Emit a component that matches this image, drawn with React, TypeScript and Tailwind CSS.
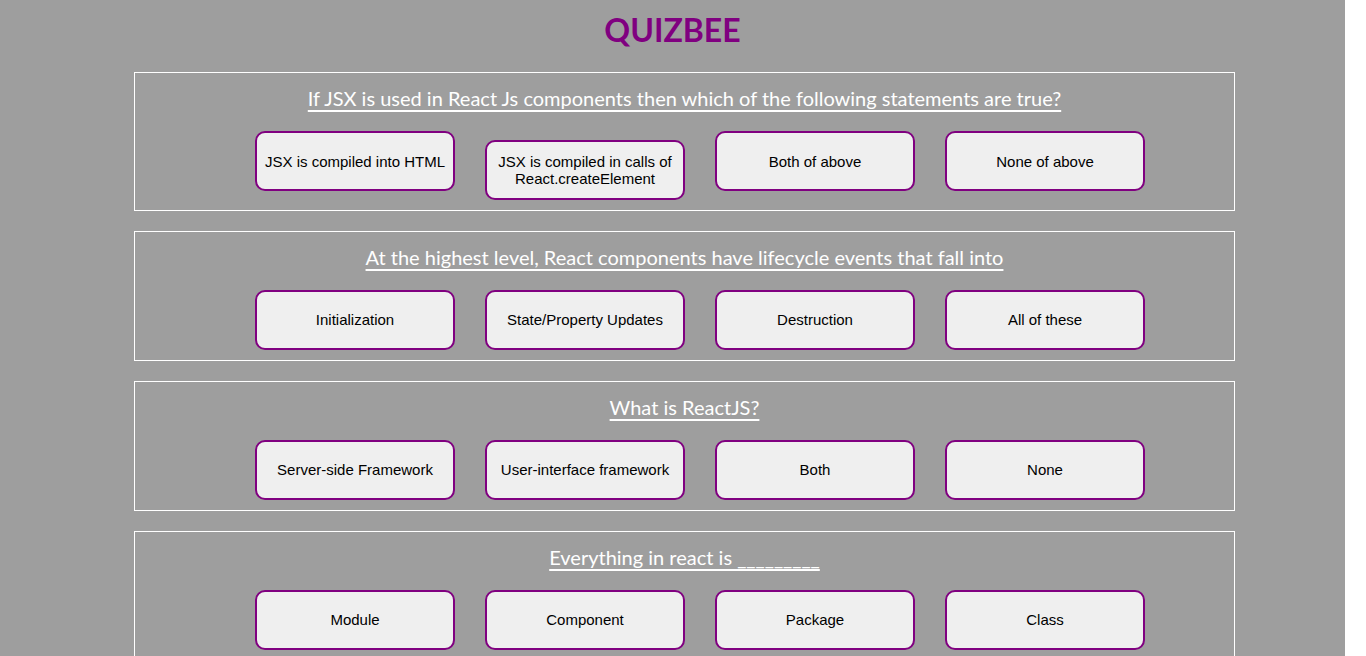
const questions = [
  {
    q: 'If JSX is used in React Js components then which of the following statements are true?',
    options: ['JSX is compiled into HTML', 'JSX is compiled in calls of React.createElement', 'Both of above', 'None of above'],
  },
  {
    q: 'At the highest level, React components have lifecycle events that fall into',
    options: ['Initialization', 'State/Property Updates', 'Destruction', 'All of these'],
  },
  {
    q: 'What is ReactJS?',
    options: ['Server-side Framework', 'User-interface framework', 'Both', 'None'],
  },
  {
    q: 'Everything in react is _________',
    options: ['Module', 'Component', 'Package', 'Class'],
  },
];

function QuestionBox({ q, options }: { q: string; options: string[] }) {
  return (
    <div className="mb-[20px] ml-[134px] w-[1101px] border border-white px-[10px] pt-[11px] pb-[10px]">
      <p className="text-center text-[20px] leading-[28px] text-white underline decoration-[1.5px] underline-offset-[4px] [font-family:Lato,'Open_Sans',sans-serif]">
        {q}
      </p>
      <div className="mt-[19px] flex items-baseline gap-[30px] pl-[110px]">
        {options.map((o) => (
          <button
            key={o}
            className="flex h-[60px] w-[200px] items-center justify-center rounded-[10px] border-2 border-[#800080] bg-[#efefef] px-[6px] text-center text-[15px] leading-[17px] text-black [font-family:'Liberation_Sans',Arial,sans-serif]"
          >
            {o}
          </button>
        ))}
      </div>
    </div>
  );
}

export default function App() {
  return (
    <div className="min-h-screen w-[1345px] bg-[#9e9e9e] pb-[20px]">
      <h1 className="pt-[10px] pb-[22px] text-center text-[32px] leading-[40px] font-bold text-[#800080] [font-family:Lato,'Open_Sans',sans-serif]">
        QUIZBEE
      </h1>
      {questions.map((item) => (
        <QuestionBox key={item.q} q={item.q} options={item.options} />
      ))}
    </div>
  );
}
